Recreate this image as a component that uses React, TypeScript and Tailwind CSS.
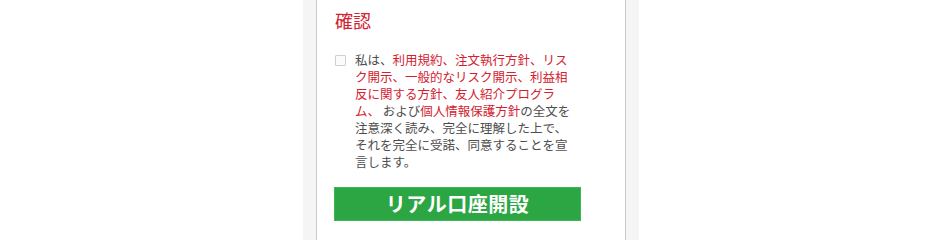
export default function App() {
  const red = 'text-[#d3212f]'
  return (
    <div className="min-h-[240px] w-full bg-white" style={{ fontFamily: '"Noto Sans CJK JP", "Noto Sans", sans-serif' }}>
      <div className="ml-[303px] w-[336px] min-h-[240px] bg-[#f5f5f5] px-[13px] flex">
        <div className="flex-1 min-h-[240px] bg-white border-x border-[#c9c9c9] pl-[18px] pt-[8px]">
          <h2 className={`text-[18px] leading-[24px] ${red}`}>確認</h2>
          <div className="mt-[19px] flex items-start">
            <span className="mt-[4px] w-[11px] h-[11px] shrink-0 border border-[#cfcfcf] bg-[#fbfbfb] rounded-[1px]" />
            <p className="ml-[9px] w-[219px] text-[12.5px] leading-[17px] text-[#4d4d4d]">
              私は、
              <span className={red}>
                利用規約、注文執行方針、リスク開示、一般的なリスク開示、利益相反に関する方針、友人紹介プログラム、
              </span>
              {' '}および<span className={red}>個人情報保護方針</span>
              の全文を注意深く読み、完全に理解した上で、それを完全に受諾、同意することを宣言します。
            </p>
          </div>
          <button className="mt-[17px] -ml-[1px] w-[247px] h-[34px] bg-[#2ba643] border border-[#3db556] text-white text-[20px] font-bold tracking-[0.5px] flex items-center justify-center">
            リアル口座開設
          </button>
        </div>
      </div>
    </div>
  )
}
